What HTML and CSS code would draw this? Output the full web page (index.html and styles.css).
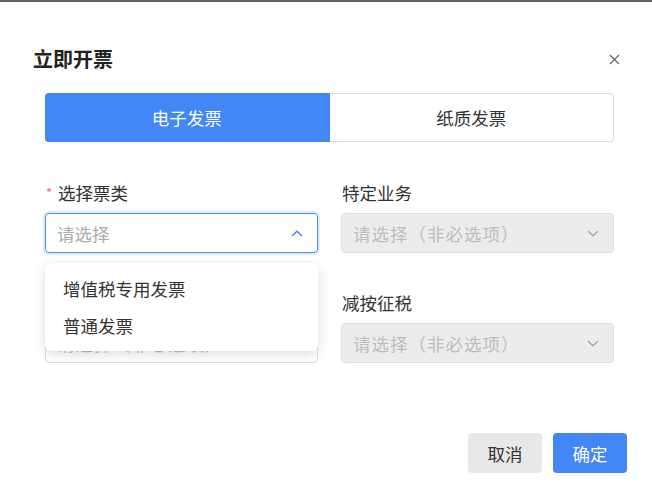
FILE: index.html
```html
<!DOCTYPE html>
<html lang="zh-CN">
<head>
<meta charset="utf-8">
<title>立即开票</title>
<link rel="stylesheet" href="styles.css">
</head>
<body>
<div class="backdrop-strip"></div>
<div class="dialog">
  <div class="dialog-header">
    <h2 class="dialog-title">立即开票</h2>
    <button class="close-btn" aria-label="关闭">
      <svg width="11" height="11" viewBox="0 0 11 11"><path d="M1 1L10 10M10 1L1 10" stroke="#666" stroke-width="1.3" fill="none"/></svg>
    </button>
  </div>
  <div class="dialog-body">
    <div class="tabs">
      <div class="tab tab-active">电子发票</div>
      <div class="tab">纸质发票</div>
    </div>
    <div class="form-grid">
      <div class="field">
        <div class="field-label"><span class="required">*</span>选择票类</div>
        <div class="select select-focus">
          <span class="placeholder">请选择</span>
          <svg class="chevron" width="12" height="7" viewBox="0 0 12 7"><path d="M1 6L6 1.2L11 6" stroke="#4285f4" stroke-width="1.4" fill="none"/></svg>
          <ul class="dropdown">
            <li class="dropdown-item">增值税专用发票</li>
            <li class="dropdown-item">普通发票</li>
          </ul>
        </div>
      </div>
      <div class="field">
        <div class="field-label">特定业务</div>
        <div class="select select-disabled">
          <span class="placeholder">请选择（非必选项）</span>
          <svg class="chevron" width="12" height="7" viewBox="0 0 12 7"><path d="M1 1L6 5.8L11 1" stroke="#a0a0a0" stroke-width="1.2" fill="none"/></svg>
        </div>
      </div>
      <div class="field">
        <div class="field-label"></div>
        <div class="select select-plain">
          <span class="placeholder">请选择（非必选项）</span>
          <svg class="chevron" width="12" height="7" viewBox="0 0 12 7"><path d="M1 1L6 5.8L11 1" stroke="#a0a0a0" stroke-width="1.2" fill="none"/></svg>
        </div>
      </div>
      <div class="field">
        <div class="field-label">减按征税</div>
        <div class="select select-disabled">
          <span class="placeholder">请选择（非必选项）</span>
          <svg class="chevron" width="12" height="7" viewBox="0 0 12 7"><path d="M1 1L6 5.8L11 1" stroke="#a0a0a0" stroke-width="1.2" fill="none"/></svg>
        </div>
      </div>
    </div>
  </div>
  <div class="dialog-footer">
    <button class="btn btn-cancel">取消</button>
    <button class="btn btn-primary">确定</button>
  </div>
</div>
</body>
</html>
```
FILE: styles.css
```css
* { box-sizing: border-box; }

html, body {
  margin: 0;
  padding: 0;
  background: #ffffff;
  font-family: "Noto Sans CJK SC", "Noto Sans", sans-serif;
  color: #333333;
}

.backdrop-strip {
  height: 2px;
  background: #626262;
}

.dialog {
  padding: 45px 25px 0 33px;
}

.dialog-header {
  display: flex;
  align-items: center;
  justify-content: space-between;
  height: 24px;
  padding-right: 7px;
}

.dialog-title {
  margin: 0;
  font-size: 20px;
  line-height: 24px;
  font-weight: 700;
  color: #222222;
}

.close-btn {
  border: 0;
  background: none;
  padding: 0;
  width: 11px;
  height: 11px;
  display: flex;
  cursor: pointer;
}

.dialog-body {
  padding: 22px 13px 0 12px;
}

.tabs {
  display: flex;
  height: 49px;
}

.tab {
  flex: 1;
  display: flex;
  align-items: center;
  justify-content: center;
  font-size: 17.5px;
  color: #333333;
  border: 1px solid #dcdcdc;
  border-left: 0;
  border-radius: 0 4px 4px 0;
}

.tab-active {
  background: #4287f5;
  border-color: #4287f5;
  color: #ffffff;
  border-radius: 4px 0 0 4px;
}

.form-grid {
  display: grid;
  grid-template-columns: 1fr 1fr;
  column-gap: 23px;
  row-gap: 39px;
  padding-top: 40px;
}

.field-label {
  font-size: 17.5px;
  line-height: 22px;
  height: 22px;
  margin-bottom: 9px;
  color: #333333;
  padding-left: 1px;
}

.required {
  color: #f56c6c;
  font-size: 13px;
  margin-right: 6px;
  vertical-align: 2px;
}

.select {
  position: relative;
  height: 40px;
  display: flex;
  align-items: center;
  justify-content: space-between;
  padding: 0 14px 0 11px;
  border: 1px solid #dcdcdc;
  border-radius: 4px;
  font-size: 17.5px;
}

.placeholder {
  color: #ababab;
}

.select-focus {
  border-color: #4d8ef5;
  box-shadow: 0 0 0 2px rgba(66, 135, 245, 0.18);
  padding-right: 14px;
}

.select-disabled {
  background: #ececec;
  border-color: #e0e0e0;
}

.select-disabled .placeholder,
.select-plain .placeholder {
  color: #bdbdbd;
  letter-spacing: 1px;
}

.dropdown {
  position: absolute;
  left: -1px;
  right: -1px;
  top: 49px;
  margin: 0;
  padding: 7px 0;
  list-style: none;
  background: #ffffff;
  border-radius: 6px;
  box-shadow: 0 3px 12px rgba(0, 0, 0, 0.14);
  z-index: 10;
}

.dropdown-item {
  height: 37px;
  line-height: 37px;
  padding-left: 18px;
  font-size: 17.5px;
  color: #333333;
}

.dialog-footer {
  display: flex;
  justify-content: flex-end;
  gap: 11px;
  padding-top: 70px;
}

.btn {
  width: 74px;
  height: 40px;
  border: 0;
  border-radius: 4px;
  font-family: inherit;
  font-size: 17.5px;
  cursor: pointer;
}

.btn-cancel {
  background: #e8e8e8;
  color: #333333;
}

.btn-primary {
  background: #4287f5;
  color: #ffffff;
}
```
